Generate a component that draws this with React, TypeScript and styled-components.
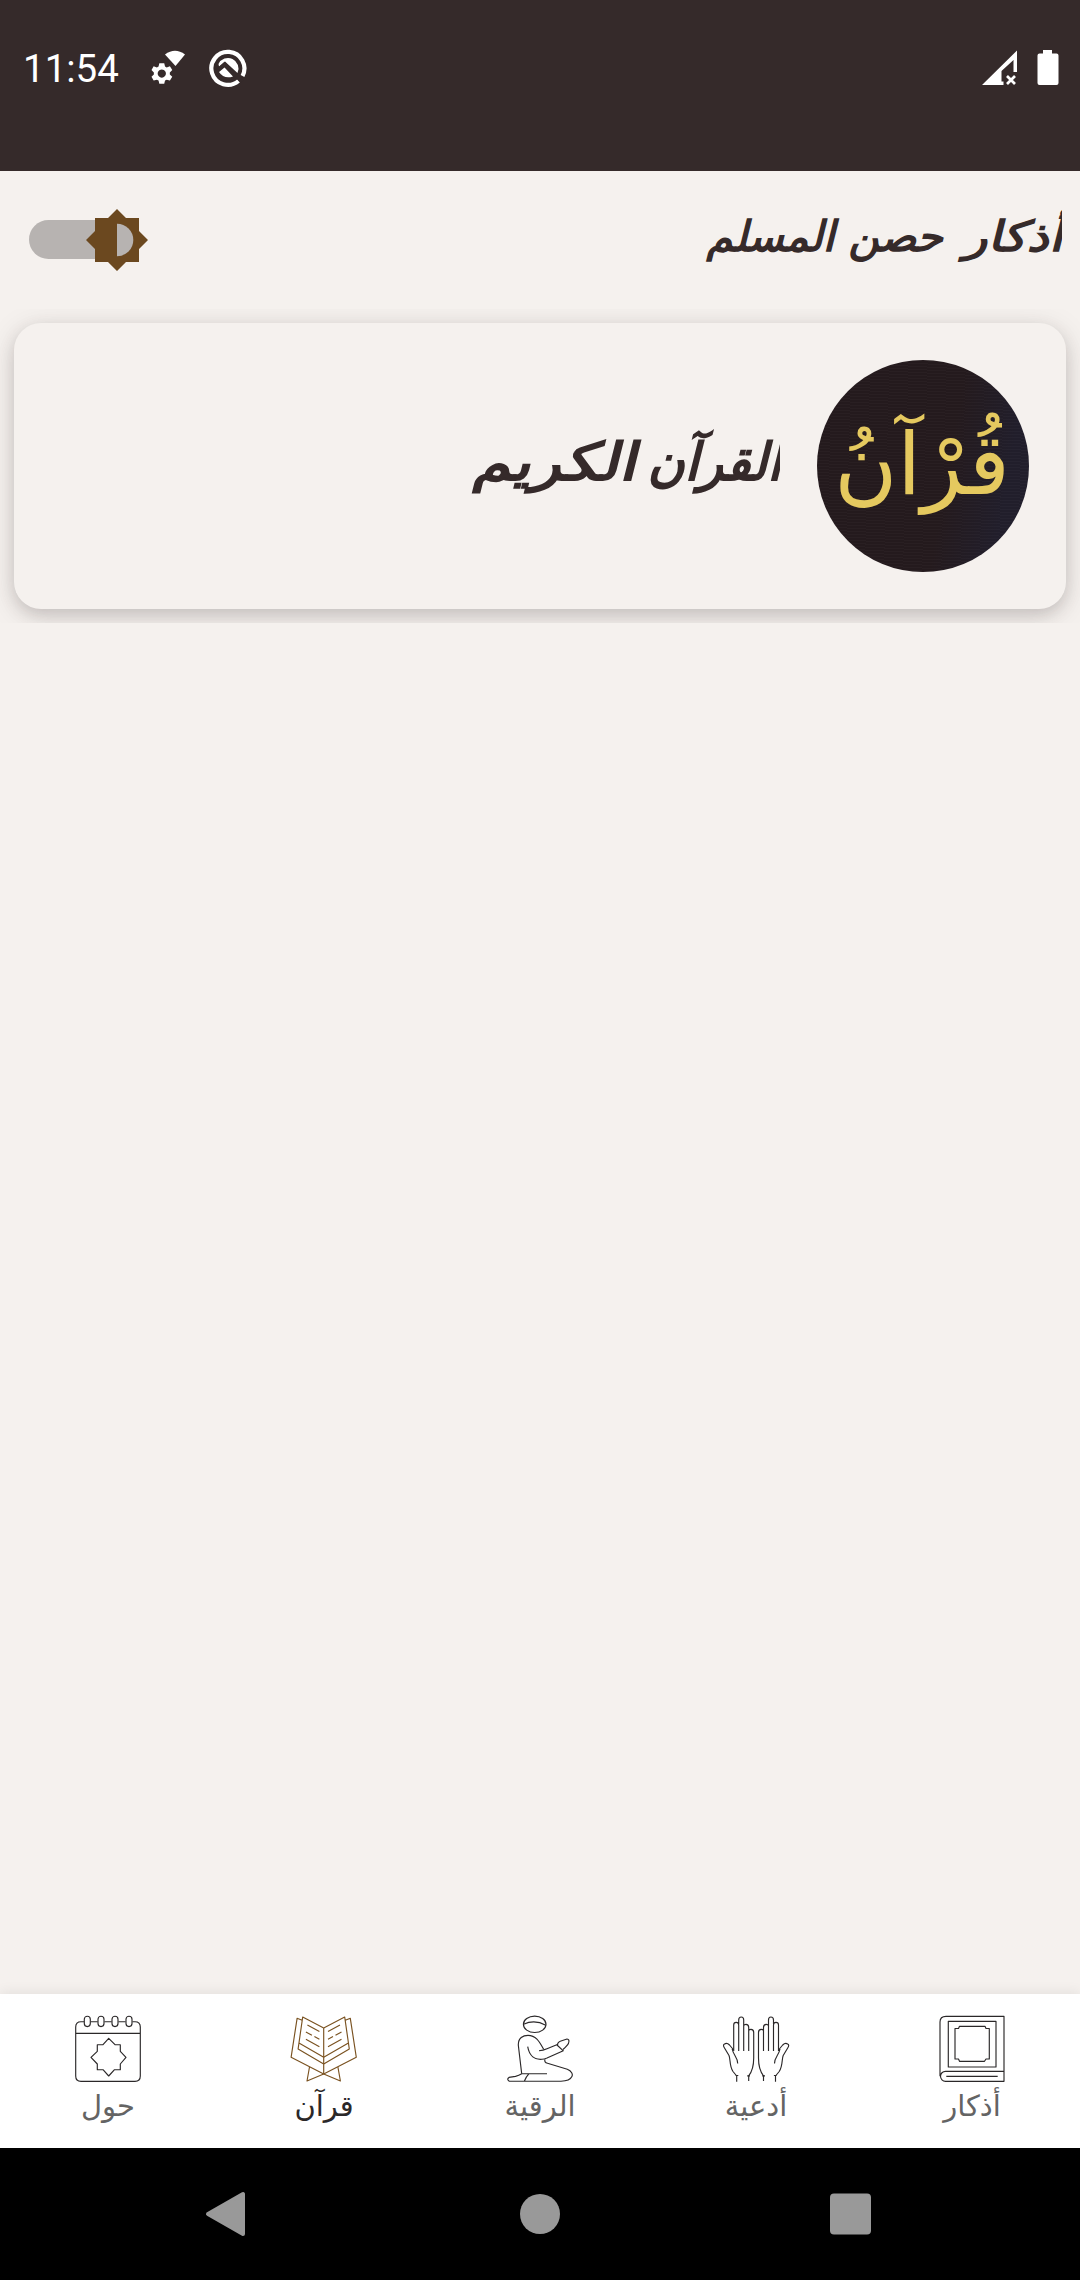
import React from "react";
import styled, { createGlobalStyle } from "styled-components";

const GlobalStyle = createGlobalStyle`
  * { box-sizing: border-box; }
  body { margin: 0; background: #f5f1ee; }
`;

const Screen = styled.div`
  width: 1080px;
  height: 2280px;
  display: flex;
  flex-direction: column;
  background: #f5f1ee;
  overflow: hidden;
  font-family: "DejaVu Sans", "Noto Sans", sans-serif;
`;

const StatusBar = styled.header`
  height: 171px;
  flex: none;
  display: flex;
  justify-content: space-between;
  padding: 40px 21px 0 23px;
  background: #352a2a;
  color: #fff;
`;

const StatusGroup = styled.div<{ $gap: number }>`
  height: 56px;
  display: flex;
  align-items: center;
  gap: ${(p) => p.$gap}px;
`;

const Clock = styled.span`
  width: 100px;
  padding-top: 2px;
  font: 400 38.5px/56px Roboto, sans-serif;
  white-space: nowrap;
`;

const AppBar = styled.div`
  height: 138px;
  flex: none;
  display: flex;
  justify-content: space-between;
  align-items: center;
  padding: 0 18px 0 29px;
`;

const ThemeSwitch = styled.button`
  width: 119px;
  height: 62px;
  padding: 0;
  border: 0;
  background: none;
  display: block;
`;

const Title = styled.h1`
  margin: 0;
  width: 480px;
  height: 80px;
  display: flex;
  gap: 13.4px;
  overflow: hidden;
  color: #352a2a;
  font-size: 42px;
  font-weight: 400;
  line-height: 74px;
  -webkit-text-stroke: 1.5px #352a2a;
  white-space: nowrap;
`;

const SlantedWord = styled.span<{ $stretch?: number; $after?: number }>`
  display: block;
  margin-left: ${(p) => p.$after ?? 0}px;
  transform-origin: right 66%;
  transform: skewX(-14deg) scaleX(${(p) => p.$stretch ?? 1});
`;

const List = styled.main`
  height: 314px;
  flex: none;
  padding: 14px;
  overflow: hidden;
`;

const Card = styled.article`
  height: 286px;
  display: flex;
  gap: 37px;
  align-items: center;
  padding: 0 37px;
  border-radius: 27px;
  background: #f5f1ee;
  box-shadow: 0 6px 16px rgba(53, 42, 42, 0.17), 0 6px 32px rgba(53, 42, 42, 0.12);
`;

const Emblem = styled.div`
  width: 212px;
  height: 212px;
  flex: none;
  display: flex;
  align-items: center;
  justify-content: center;
  border-radius: 50%;
  color: #e5c95f;
  background:
    repeating-linear-gradient(3deg, rgba(255, 255, 255, 0.025) 0 1px, transparent 1px 3px),
    linear-gradient(100deg, #241a1d 0 60%, #211e2b 85%);
  font-size: 86px;
  line-height: 100px;
`;

const EmblemText = styled.span`
  padding: 0 2px 5px 0;
  white-space: nowrap;
`;

const CardTitle = styled.h2`
  margin: 0;
  width: 400px;
  height: 120px;
  display: flex;
  gap: 16.5px;
  overflow: hidden;
  color: #352a2a;
  font-size: 52px;
  font-weight: 400;
  line-height: 112px;
  -webkit-text-stroke: 2px #352a2a;
  white-space: nowrap;
`;

const Body = styled.div`
  flex: 1;
`;

const Tabs = styled.nav`
  height: 154px;
  flex: none;
  display: grid;
  grid-template-columns: repeat(5, 1fr);
  background: #fff;
  box-shadow: 0 -2px 12px rgba(0, 0, 0, 0.07);
`;

const Tab = styled.a<{ $active?: boolean }>`
  display: flex;
  flex-direction: column;
  align-items: center;
  padding-top: 21px;
  color: ${(p) => (p.$active ? "#2b2829" : "#646464")};
`;

const TabIcon = styled.svg<{ $active?: boolean }>`
  width: 68px;
  height: 68px;
  flex: none;
  overflow: visible;
  fill: none;
  stroke: ${(p) => (p.$active ? "#7a5220" : "#2b2829")};
  stroke-width: 1.15;
  stroke-linejoin: round;
`;

const TabLabel = styled.span`
  font-size: 29px;
  line-height: 46px;
  white-space: nowrap;
`;

const SystemBar = styled.footer`
  height: 132px;
  flex: none;
  display: flex;
  justify-content: space-between;
  align-items: center;
  padding: 0 208px 0 204px;
  background: #000;
`;

const paths = {
  book: (
    <>
      <path d="M2 61.3V7Q2 1.3 8 1.3H66V66.3H7.5A5 5 0 0 1 7.5 56.3H66M8.3 61.3H59.7" />
      <path d="M10.3 6.3H58V52H10.3Z" />
      <path d="M21.5 11.3H47L48 13.5H51.3V44H48L46.5 46.3H21.5L20.5 44H17V13.5H20.5Z" />
    </>
  ),
  person: (
    <>
      <ellipse cx="28.7" cy="9.3" rx="11.3" ry="8.2" />
      <path d="M17.6 9.2Q28.7 4 39.8 10.2" />
      <path d="M15.7 58.7L12.3 30C12.2 23 17 20.3 22 20.3C30.7 20.3 34 28 37.7 34.3" />
      <path d="M21.7 31.7C23.3 41 29 45 36 44.3Q38 44.2 41 43L57.3 35.8M33 35.7Q37 35.4 41 33.7L52 29.3M51 30L57.6 36.2" />
      <path d="M51.5 30Q51.5 27.2 55 26L61 24Q64 24.2 62.4 28.6Q61.5 30.5 57 34.5" />
      <path d="M39 44.3Q38 47.5 41.5 48.3L61.3 54.3C70 58 67 66 55 66.2H3.3Q.3 64.2 3 62.4L9.5 61.4Q13 60.4 15.7 58.7H41M23 58.7Q20 62 18.3 66.2" />
    </>
  ),
  calendar: (
    <>
      <path d="M10 6.7H7Q1.7 6.7 1.7 12V61Q1.7 66.3 7 66.3H61Q66.3 66.3 66.3 61V12Q66.3 6.7 61 6.7H58.4M16.7 6.7H23.7M30.4 6.7H37.7M44.4 6.7H51.6M1.7 18.3H66.3" />
      {[13.3, 27, 41, 55].map((x) => (
        <rect key={x} x={x - 3} y="1.2" width="6" height="10.4" rx="3" />
      ))}
      <path d="M34.7 23.3L41 29.7H46.3V36.3L52 42.3L46.3 49V54.7H40.5L34.7 61L29 54.7H23.3V49L17 42.3L23.3 36.3V29.7H29Z" />
    </>
  ),
};

const halfQuran = (
  <>
    <path d="M33.7 13L54.7 2L59.3 34L33.7 49M33.7 42.3L58 28.3M55.3 5.2L60.3 3.3L66.3 42.3L33.7 59L17 66L19.5 52" />
    <path d="M38 16.5L50 10M38 24.3L43 21.6M45.5 20.3L51.5 17M38 31.7L51.5 24.3" />
  </>
);

const halfHands = (
  <>
    <path d="M11.7 36V10Q11.7 7.3 14.2 7.3Q16.7 7.3 16.7 10V36M16.7 9V5Q16.7 2 19.3 2Q21.7 2 21.7 5V36M21.7 10.5Q22.2 9.3 24 9.3Q26.7 9.3 26.7 12.5V36M26.7 15.3Q27.5 14.3 29 14.3Q31.7 14.3 31.7 17.5V43C31.7 52 29.8 57 26.7 60.8V66" />
    <path d="M11.7 35L7.5 30Q5 27.5 2.5 29Q.5 30 2.5 33L7 40.5C8.6 44 7.2 51 11 56.5L14.7 61V66.7M10.2 34C11.5 41 15.7 42 15.7 48.5M13.5 60.5H16.3M25.2 60.8H28" />
  </>
);

type TabData = { label: string; icon: React.ReactNode; active?: boolean };

const tabs: TabData[] = [
  { label: "أذكار", icon: paths.book },
  { label: "أدعية", icon: <>{halfHands}<g transform="translate(68.2 0) scale(-1 1)">{halfHands}</g></> },
  { label: "الرقية", icon: paths.person },
  { label: "قرآن", icon: <>{halfQuran}<g transform="translate(67.4 0) scale(-1 1)">{halfQuran}</g><path d="M33.7 13V59" /></>, active: true },
  { label: "حول", icon: paths.calendar },
];

function SettingsWifiIcon() {
  return (
    <svg width="36" height="36" viewBox="0 0 36 36" fill="#fff">
      <path d="M14 4.5Q24-3 34 4.5L24.5 16Z" />
      <path
        fillRule="evenodd"
        transform="translate(.5 1.5) scale(.98)"
        d="M8 12h5l.8 3.2 1.7 1L18.8 15l2.4 4-2.5 2.4v2l2.5 2.3-2.4 4-3.3-1-1.7 1L13 33H8l-.8-3.3-1.7-1-3.3 1-2.2-4L2.4 23.4v-2L0 19l2.2-4 3.3 1.2 1.7-1ZM10.5 18.3a4.2 4.2 0 1 0 .01 0Z"
      />
    </svg>
  );
}

function SyncBadgeIcon() {
  return (
    <svg width="40" height="40" viewBox="0 0 40 40" fill="none">
      <path d="M29.500 33A16.500 16.500 0 1 1 33.500 28" stroke="#fff" strokeWidth="4.200" />
      <path d="M9.500 16A10.500 10.500 0 1 1 28.500 25L16 13.500L10 18.500Z" fill="#fff" />
      <path d="M10 24L15.500 19.500L24 28.500Q15 31.500 10 24Z" fill="#fff" />
      <path d="M8 23L15.500 16L33 33.500" stroke="#352a2a" strokeWidth="3.400" />
    </svg>
  );
}

export default function App() {
  return (
    <Screen>
      <GlobalStyle />
      <StatusBar>
        <StatusGroup $gap={28}>
          <Clock>11:54</Clock>
          <StatusGroup $gap={22}>
            <SettingsWifiIcon />
            <SyncBadgeIcon />
          </StatusGroup>
        </StatusGroup>
        <StatusGroup $gap={19}>
          <svg width="36" height="36" viewBox="0 0 36 36" fill="#fff">
            <path d="M0 35L35 .5V22H31.500V10L19.500 21V31.500H21.500V35Z" />
            <path d="M25 26L33 34M33 26L25 34" stroke="#fff" strokeWidth="2.700" />
          </svg>
          <svg width="22" height="36" viewBox="0 0 22 36" fill="#fff">
            <path d="M6 0H15V3.500H19.500Q21.500 3.500 21.500 5.500V33Q21.500 35 19.500 35H2.500Q.5 35 .5 33V5.500Q.5 3.500 2.500 3.500H6Z" />
          </svg>
        </StatusGroup>
      </StatusBar>
      <AppBar>
        <ThemeSwitch aria-label="theme">
          <svg width="119" height="62" viewBox="0 0 119 62">
            <rect x="0" y="11" width="106" height="39" rx="19.500" fill="#b7b3b1" />
            <path d="M88 0L97 9H110V22L119 31L110 40V53H97L88 62L79 53H66V40L57 31L66 22V9H79Z" fill="#6b481f" />
            <path d="M88 14.700A16.300 16.300 0 0 1 88 47.300Z" fill="#b7b3b1" />
          </svg>
        </ThemeSwitch>
        <Title dir="rtl">
          <SlantedWord $stretch={1.19} $after={23}>أذكار</SlantedWord>{" "}
          <SlantedWord>حصن</SlantedWord>{" "}
          <SlantedWord>المسلم</SlantedWord>
        </Title>
      </AppBar>
      <List dir="rtl">
        <Card>
          <Emblem>
            <EmblemText>قُرْآنُ</EmblemText>
          </Emblem>
          <CardTitle>
            <SlantedWord $stretch={0.97} $after={-9}>القرآن</SlantedWord>{" "}
            <SlantedWord $stretch={1.2}>الكريم</SlantedWord>
          </CardTitle>
        </Card>
      </List>
      <Body />
      <Tabs dir="rtl">
        {tabs.map((t) => (
          <Tab key={t.label} $active={t.active}>
            <TabIcon viewBox="0 0 68 68" $active={t.active}>{t.icon}</TabIcon>
            <TabLabel>{t.label}</TabLabel>
          </Tab>
        ))}
      </Tabs>
      <SystemBar>
        <svg width="44" height="46" viewBox="0 0 44 46">
          <path d="M4 23L39 3V43Z" fill="#999" stroke="#999" strokeWidth="4" strokeLinejoin="round" />
        </svg>
        <svg width="42" height="42" viewBox="0 0 42 42">
          <circle cx="22" cy="21" r="20" fill="#999" />
        </svg>
        <svg width="42" height="42" viewBox="0 0 42 42">
          <rect x="0" y="0.500" width="41" height="41" rx="4" fill="#999" />
        </svg>
      </SystemBar>
    </Screen>
  );
}
